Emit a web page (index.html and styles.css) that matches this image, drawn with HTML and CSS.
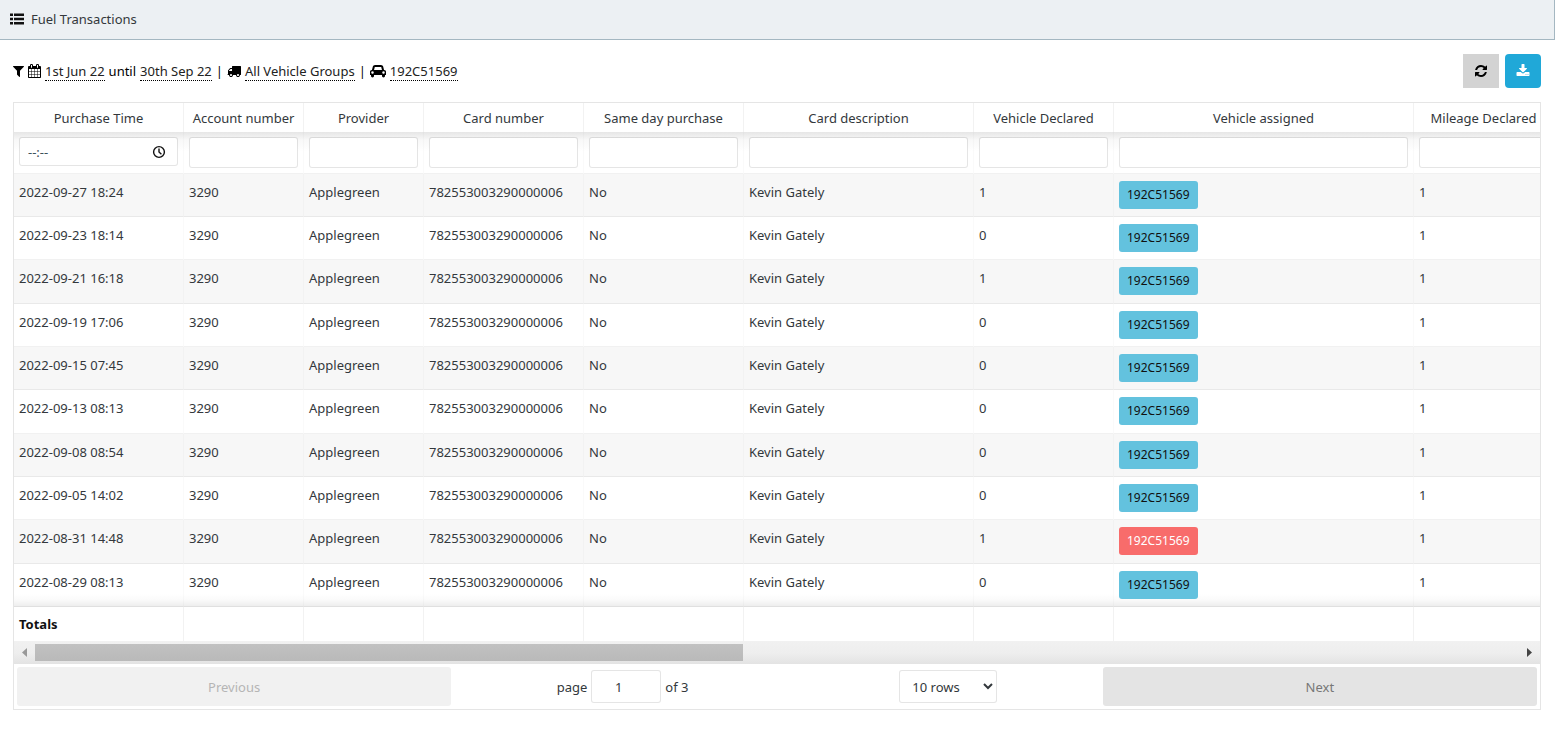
FILE: index.html
```html
<!DOCTYPE html>
<html lang="en">
  <head>
    <meta charset="UTF-8" />
    <meta name="viewport" content="width=device-width, initial-scale=1.0" />
    <title>Fuel Transactions</title>
    <link rel="stylesheet" href="styles.css">
  </head>
  <body>
    <header class="topbar">
      <svg class="icon" viewBox="0 0 14 14"><path d="M0 1.5h3v2.4H0zM4 1.5h10v2.4H4zM0 5.8h3v2.4H0zM4 5.8h10v2.4H4zM0 10.1h3v2.4H0zM4 10.1h10v2.4H4z"/></svg>
      <h1 class="title">Fuel Transactions</h1>
    </header>

    <main class="content">
      <div class="toolbar">
        <div class="filters">
          <svg class="icon filter-icon" viewBox="192 0 1408 1792"><path d="M1595 295q17 41-14 70l-493 493v742q0 42-39 59-13 5-25 5-27 0-45-19l-256-256q-19-19-19-45v-486l-493-493q-31-29-14-70 17-39 59-39h1280q42 0 59 39z"/></svg>
          <svg class="icon calendar-icon" viewBox="64 0 1664 1792"><path d="M192 1664h288v-288h-288v288zm352 0h320v-288h-320v288zm-352-352h288v-320h-288v320zm352 0h320v-320h-320v320zm-352-384h288v-288h-288v288zm736 736h320v-288h-320v288zm-384-736h320v-288h-320v288zm768 736h288v-288h-288v288zm-384-352h320v-320h-320v320zm-352-864v-288q0-13-9.5-22.5t-22.5-9.5h-64q-13 0-22.5 9.5t-9.5 22.5v288q0 13 9.5 22.5t22.5 9.5h64q13 0 22.5-9.5t9.5-22.5zm736 864h288v-320h-288v320zm-384-384h320v-288h-320v288zm384 0h288v-288h-288v288zm32-480v-288q0-13-9.5-22.5t-22.5-9.5h-64q-13 0-22.5 9.5t-9.5 22.5v288q0 13 9.5 22.5t22.5 9.5h64q13 0 22.5-9.5t9.5-22.5zm384-64v1280q0 52-38 90t-90 38h-1408q-52 0-90-38t-38-90v-1280q0-52 38-90t90-38h128v-96q0-66 47-113t113-47h64q66 0 113 47t47 113v96h384v-96q0-66 47-113t113-47h64q66 0 113 47t47 113v96h128q52 0 90 38t38 90z"/></svg>
          <a href="#" class="pick">1st Jun 22</a>
          <span>until</span>
          <a href="#" class="pick">30th Sep 22</a>
          <span>|</span>
          <svg class="icon" viewBox="0 0 1792 1792"><path d="M640 1408q0-52-38-90t-90-38-90 38-38 90 38 90 90 38 90-38 38-90zm-384-512h384v-256h-158q-13 0-22 9l-195 195q-9 9-9 22v30zm1280 512q0-52-38-90t-90-38-90 38-38 90 38 90 90 38 90-38 38-90zm256-1088v1024q0 15-4 26.5t-13.5 18.5-16.5 11.5-23.5 6-22.5 2-25.5 0-22.5-.5q0 106-75 181t-181 75-181-75-75-181h-384q0 106-75 181t-181 75-181-75-75-181h-64q-3 0-22.5.5t-25.5 0-22.5-2-23.5-6-16.5-11.5-13.5-18.5-4-26.5q0-26 19-45t45-19v-320q0-8-.5-35t0-38 2.5-34.5 6.5-37 14-30.5 22.5-30l198-198q19-19 50.5-32t58.5-13h160v-192q0-26 19-45t45-19h1024q26 0 45 19t19 45z"/></svg>
          <a href="#" class="pick">All Vehicle Groups</a>
          <span>|</span>
          <svg class="icon car-icon" viewBox="0 0 2048 1792"><path d="M480 1088q0-66-47-113t-113-47-113 47-47 113 47 113 113 47 113-47 47-113zm36-320h1016l-89-357q-2-8-14-17.5t-21-9.5h-768q-9 0-21 9.5t-14 17.5zm1372 320q0-66-47-113t-113-47-113 47-47 113 47 113 113 47 113-47 47-113zm160-96v384q0 14-9 23t-23 9h-96v128q0 80-56 136t-136 56-136-56-56-136v-128h-1024v128q0 80-56 136t-136 56-136-56-56-136v-128h-96q-14 0-23-9t-9-23v-384q0-93 65.5-158.5t158.5-65.5h28l105-419q23-94 104-157.5t179-63.5h768q98 0 179 63.5t104 157.5l105 419h28q93 0 158.5 65.5t65.5 158.5z"/></svg>
          <a href="#" class="pick">192C51569</a>
        </div>
        <div class="actions">
          <button type="button" class="btn refresh" aria-label="Refresh">
            <svg class="icon" viewBox="0 0 1792 1792"><path d="M1639 1056q0 5-1 7-64 268-268 434.5t-478 166.5q-146 0-282.5-55t-243.5-157l-129 129q-19 19-45 19t-45-19-19-45v-448q0-26 19-45t45-19h448q26 0 45 19t19 45-19 45l-137 137q71 66 161 102t187 36q134 0 250-65t186-179q11-17 53-117 8-23 30-23h192q13 0 22.5 9.5t9.5 22.5zm25-800v448q0 26-19 45t-45 19h-448q-26 0-45-19t-19-45 19-45l138-138q-148-137-349-137-134 0-250 65t-186 179q-11 17-53 117-8 23-30 23h-199q-13 0-22.5-9.5t-9.5-22.5v-7q65-268 270-434.5t480-166.5q146 0 284 55.5t245 156.5l130-129q19-19 45-19t45 19 19 45z"/></svg>
          </button>
          <button type="button" class="btn download" aria-label="Download">
            <svg class="icon" viewBox="0 0 1792 1792"><path d="M1344 1344q0-26-19-45t-45-19-45 19-19 45 19 45 45 19 45-19 19-45zm256 0q0-26-19-45t-45-19-45 19-19 45 19 45 45 19 45-19 19-45zm128-224v320q0 40-28 68t-68 28h-1472q-40 0-68-28t-28-68v-320q0-40 28-68t68-28h465l135 136q58 56 136 56t136-56l136-136h464q40 0 68 28t28 68zm-325-569q17 41-14 70l-448 448q-18 19-45 19t-45-19l-448-448q-31-29-14-70 17-39 59-39h256v-448q0-26 19-45t45-19h256q26 0 45 19t19 45v448h256q42 0 59 39z"/></svg>
          </button>
        </div>
      </div>

      <div class="grid">
        <div class="table-wrap">
          <table class="table">
            <colgroup>
              <col class="w170"><col class="w120"><col class="w120"><col class="w160"><col class="w160">
              <col class="w230"><col class="w140"><col class="w300"><col class="w140">
            </colgroup>
            <thead>
              <tr class="head">
                <th>Purchase Time</th>
                <th>Account number</th>
                <th>Provider</th>
                <th>Card number</th>
                <th>Same day purchase</th>
                <th>Card description</th>
                <th>Vehicle Declared</th>
                <th>Vehicle assigned</th>
                <th>Mileage Declared</th>
              </tr>
              <tr class="search">
                <td>
                  <label class="time">
                    <input type="text" placeholder="--:--" aria-label="Purchase Time" />
                    <svg class="clock" viewBox="0 0 14 14"><circle cx="7" cy="7" r="5.4"/><path d="M7 3.6V7l2.4 2.2"/></svg>
                  </label>
                </td>
                <td><input type="text" class="field" aria-label="Account number" /></td>
                <td><input type="text" class="field" aria-label="Provider" /></td>
                <td><input type="text" class="field" aria-label="Card number" /></td>
                <td><input type="text" class="field" aria-label="Same day purchase" /></td>
                <td><input type="text" class="field" aria-label="Card description" /></td>
                <td><input type="text" class="field" aria-label="Vehicle Declared" /></td>
                <td><input type="text" class="field" aria-label="Vehicle assigned" /></td>
                <td><input type="text" class="field" aria-label="Mileage Declared" /></td>
              </tr>
            </thead>
            <tbody>
              <tr>
                <td>2022-09-27 18:24</td><td>3290</td><td>Applegreen</td><td>782553003290000006</td><td>No</td>
                <td>Kevin Gately</td><td>1</td><td><button type="button" class="tag">192C51569</button></td><td>1</td>
              </tr>
              <tr>
                <td>2022-09-23 18:14</td><td>3290</td><td>Applegreen</td><td>782553003290000006</td><td>No</td>
                <td>Kevin Gately</td><td>0</td><td><button type="button" class="tag">192C51569</button></td><td>1</td>
              </tr>
              <tr>
                <td>2022-09-21 16:18</td><td>3290</td><td>Applegreen</td><td>782553003290000006</td><td>No</td>
                <td>Kevin Gately</td><td>1</td><td><button type="button" class="tag">192C51569</button></td><td>1</td>
              </tr>
              <tr>
                <td>2022-09-19 17:06</td><td>3290</td><td>Applegreen</td><td>782553003290000006</td><td>No</td>
                <td>Kevin Gately</td><td>0</td><td><button type="button" class="tag">192C51569</button></td><td>1</td>
              </tr>
              <tr>
                <td>2022-09-15 07:45</td><td>3290</td><td>Applegreen</td><td>782553003290000006</td><td>No</td>
                <td>Kevin Gately</td><td>0</td><td><button type="button" class="tag">192C51569</button></td><td>1</td>
              </tr>
              <tr>
                <td>2022-09-13 08:13</td><td>3290</td><td>Applegreen</td><td>782553003290000006</td><td>No</td>
                <td>Kevin Gately</td><td>0</td><td><button type="button" class="tag">192C51569</button></td><td>1</td>
              </tr>
              <tr>
                <td>2022-09-08 08:54</td><td>3290</td><td>Applegreen</td><td>782553003290000006</td><td>No</td>
                <td>Kevin Gately</td><td>0</td><td><button type="button" class="tag">192C51569</button></td><td>1</td>
              </tr>
              <tr>
                <td>2022-09-05 14:02</td><td>3290</td><td>Applegreen</td><td>782553003290000006</td><td>No</td>
                <td>Kevin Gately</td><td>0</td><td><button type="button" class="tag">192C51569</button></td><td>1</td>
              </tr>
              <tr>
                <td>2022-08-31 14:48</td><td>3290</td><td>Applegreen</td><td>782553003290000006</td><td>No</td>
                <td>Kevin Gately</td><td>1</td><td><button type="button" class="tag danger">192C51569</button></td><td>1</td>
              </tr>
              <tr>
                <td>2022-08-29 08:13</td><td>3290</td><td>Applegreen</td><td>782553003290000006</td><td>No</td>
                <td>Kevin Gately</td><td>0</td><td><button type="button" class="tag">192C51569</button></td><td>1</td>
              </tr>
            </tbody>
            <tfoot>
              <tr>
                <td>Totals</td><td></td><td></td><td></td><td></td><td></td><td></td><td></td><td></td>
              </tr>
            </tfoot>
          </table>
        </div>

        <div class="scrollbar">
          <svg class="arrow left" viewBox="0 0 5 9"><path d="M5 0v9L0 4.5z"/></svg>
          <div class="track"><div class="thumb"></div></div>
          <svg class="arrow" viewBox="0 0 5 9"><path d="M0 0v9l5-4.5z"/></svg>
        </div>

        <div class="pagination">
          <button type="button" class="page-btn" disabled>Previous</button>
          <div class="center">
            <label class="page">page <input type="number" value="1" class="jump" /> of 3</label>
            <select class="rows" aria-label="Rows per page">
              <option>5 rows</option>
              <option selected>10 rows</option>
              <option>20 rows</option>
            </select>
          </div>
          <button type="button" class="page-btn">Next</button>
        </div>
      </div>
    </main>
  </body>
</html>
```

FILE: styles.css
```css
* {
  box-sizing: border-box;
}

body {
  margin: 0;
  background-color: #fff;
  color: #33383c;
  font-family: "Noto Sans", "Open Sans", sans-serif;
  font-size: 13px;
  line-height: 20px;
}

button,
input,
select {
  font: inherit;
  color: inherit;
}

.icon {
  width: 14px;
  height: 14px;
  flex: none;
  fill: currentColor;
}

.topbar {
  display: flex;
  align-items: center;
  gap: 7px;
  height: 40px;
  padding: 0 10px 1px;
  background-color: #ecf0f3;
  border-right: 1px solid #a4b7c1;
  border-bottom: 1px solid #a4b7c1;
}
.topbar .icon {
  color: #111;
}
.title {
  margin: 0;
  font-size: 13px;
  font-weight: 400;
}

.content {
  padding: 14px 14px 0 13px;
}
.toolbar {
  display: flex;
  justify-content: space-between;
  align-items: center;
  margin-bottom: 14px;
}
.filters {
  display: flex;
  align-items: center;
  gap: 4px;
  color: #000;
}
.filter-icon {
  width: 11px;
}
.calendar-icon {
  width: 13px;
}
.car-icon {
  width: 16px;
}
.pick {
  color: #222;
  line-height: 18px;
  text-decoration: none;
  border-bottom: 1px dotted #000;
}
.actions {
  display: flex;
  gap: 6px;
}
.btn {
  display: flex;
  justify-content: center;
  align-items: center;
  height: 34px;
  padding: 0 11px;
  border: none;
}
.refresh {
  background-color: #d3d3d3;
  color: #000;
}
.download {
  background-color: #20a8d8;
  color: #fff;
  border-radius: 4px;
}

.grid {
  border: 1px solid #e5e5e5;
}
.table-wrap {
  overflow: hidden;
}
.table {
  width: 1540px;
  table-layout: fixed;
  border-collapse: separate;
  border-spacing: 0;
}
.w120 {
  width: 120px;
}
.w140 {
  width: 140px;
}
.w160 {
  width: 160px;
}
.w170 {
  width: 170px;
}
.w230 {
  width: 230px;
}
.w300 {
  width: 300px;
}
.table th,
.table td {
  padding: 7px 5px;
  border-right: 1px solid rgba(0, 0, 0, 0.05);
  text-align: left;
  vertical-align: top;
}
.table .head th {
  height: 29px;
  padding: 5px 5px 4px;
  font-weight: 400;
  text-align: center;
  white-space: nowrap;
}
.search {
  background: linear-gradient(#e6e6e6, #f8f8f8 8px, #fff 20px);
}
.table .search td {
  height: 42px;
  padding: 5px;
  border-right-color: rgba(0, 0, 0, 0.02);
  border-bottom: 1px solid rgba(0, 0, 0, 0.05);
}
.field,
.time {
  width: 100%;
  height: 31px;
  background-color: #fff;
  border: 1px solid rgba(0, 0, 0, 0.1);
  border-radius: 3px;
  background-clip: padding-box;
}
.field {
  display: block;
  padding: 5px 7px;
}
.time {
  display: flex;
  align-items: center;
  height: 29px;
  padding: 0 11px 0 8px;
}
.time input {
  flex: 1;
  min-width: 0;
  padding: 0;
  border: none;
  outline: none;
}
.time input::placeholder {
  color: #3e515b;
}
.clock {
  width: 14px;
  height: 14px;
  fill: none;
  stroke: #111;
  stroke-width: 1.4;
}

.table tbody td {
  height: 43px;
  padding-bottom: 6px;
  border-right-color: rgba(0, 0, 0, 0.02);
  border-bottom: 1px solid rgba(0, 0, 0, 0.05);
  line-height: 22px;
}
.table tbody tr:nth-child(3n) td {
  height: 44px;
}
.table tbody tr:nth-child(odd) {
  background-color: #f7f7f7;
}
.table tbody tr:last-child {
  background: linear-gradient(#fff 30px, #fafafa 36px, #ececec);
}
.tag {
  display: block;
  height: 28px;
  padding: 0 8px;
  background-color: #63c2de;
  border: none;
  border-radius: 3px;
  color: #111;
  font-size: 12px;
}
.danger {
  background-color: #f86c6b;
  color: #fff;
}
.table tfoot td {
  height: 34px;
  color: #111;
  font-weight: 700;
}

.scrollbar {
  display: flex;
  align-items: center;
  height: 23px;
  padding: 0 8px;
  background: linear-gradient(#f1f1f1, #eee 12px, #e3e3e3);
}
.arrow {
  width: 5px;
  height: 9px;
  fill: #444;
}
.arrow.left {
  fill: #999;
}
.track {
  flex: 1;
  margin: 0 8px;
}
.thumb {
  width: 47.7%;
  height: 17px;
  background: linear-gradient(#c1c1c1, #b9b9b9);
}

.pagination {
  display: flex;
  align-items: stretch;
  padding: 3px;
}
.page-btn {
  flex: 1;
  height: 39px;
  padding: 0;
  background-color: #e4e4e4;
  border: none;
  border-radius: 3px;
  color: #777;
}
.page-btn:disabled {
  background-color: #f1f1f1;
  color: #b5b5b5;
}
.center {
  flex: 1.5;
  display: flex;
  justify-content: space-around;
  align-items: center;
}
.page {
  display: flex;
  align-items: center;
  gap: 4px;
}
.jump,
.rows {
  height: 33px;
  background-color: #fff;
  border: 1px solid rgba(0, 0, 0, 0.1);
  border-radius: 3px;
}
.jump {
  width: 70px;
  padding: 5px 7px;
  text-align: center;
}
.rows {
  width: 98px;
  padding: 5px 4px 5px 8px;
}
```
